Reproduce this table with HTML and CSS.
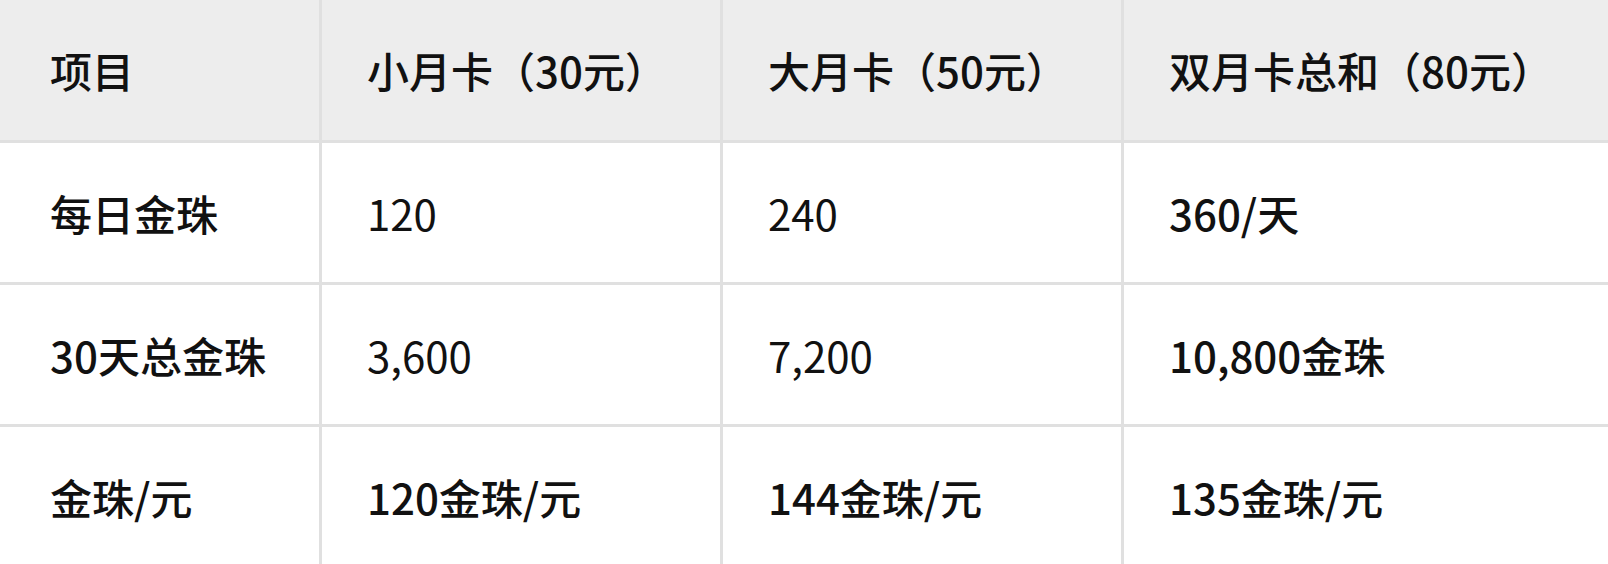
FILE: index.html
```html
<!DOCTYPE html>
<html lang="zh-CN">
<head>
<meta charset="utf-8">
<title>月卡对比</title>
<link rel="stylesheet" href="styles.css">
</head>
<body>
<table class="compare">
  <colgroup>
    <col class="c1">
    <col class="c2">
    <col class="c3">
    <col class="c4">
  </colgroup>
  <thead>
    <tr>
      <th>项目</th>
      <th>小月卡（30元）</th>
      <th>大月卡（50元）</th>
      <th>双月卡总和（80元）</th>
    </tr>
  </thead>
  <tbody>
    <tr>
      <th>每日金珠</th>
      <td>120</td>
      <td>240</td>
      <td class="strong">360/天</td>
    </tr>
    <tr>
      <th>30天总金珠</th>
      <td>3,600</td>
      <td>7,200</td>
      <td class="strong">10,800金珠</td>
    </tr>
    <tr>
      <th>金珠/元</th>
      <td class="strong">120金珠/元</td>
      <td class="strong">144金珠/元</td>
      <td class="strong">135金珠/元</td>
    </tr>
  </tbody>
</table>
</body>
</html>
```
FILE: styles.css
```css
html, body {
  margin: 0;
  padding: 0;
  background: #ffffff;
}

body {
  font-family: "PingFang SC", "Noto Sans CJK SC", "Noto Sans", sans-serif;
  color: #111111;
  overflow: hidden;
}

.compare {
  border-collapse: separate;
  border-spacing: 0;
  table-layout: fixed;
  width: 1608px;
  font-size: 42px;
  line-height: 1;
}

.c1 { width: 322px; }
.c2 { width: 401px; }
.c3 { width: 401px; }
.c4 { width: 484px; }

.compare th,
.compare td {
  box-sizing: border-box;
  height: 142px;
  padding: 0 0 0 45px;
  text-align: left;
  vertical-align: middle;
  border-right: 3px solid #e0e0e0;
  border-bottom: 3px solid #e0e0e0;
  white-space: nowrap;
}

.compare tr > :last-child {
  border-right: none;
}

.compare thead th {
  height: 143px;
  background: #ededed;
  font-weight: 500;
}

.compare tr > :first-child {
  padding-left: 50px;
}

.compare tbody th {
  font-weight: 500;
}

.compare td {
  font-weight: 400;
}

.compare td.strong {
  font-weight: 500;
}
```
